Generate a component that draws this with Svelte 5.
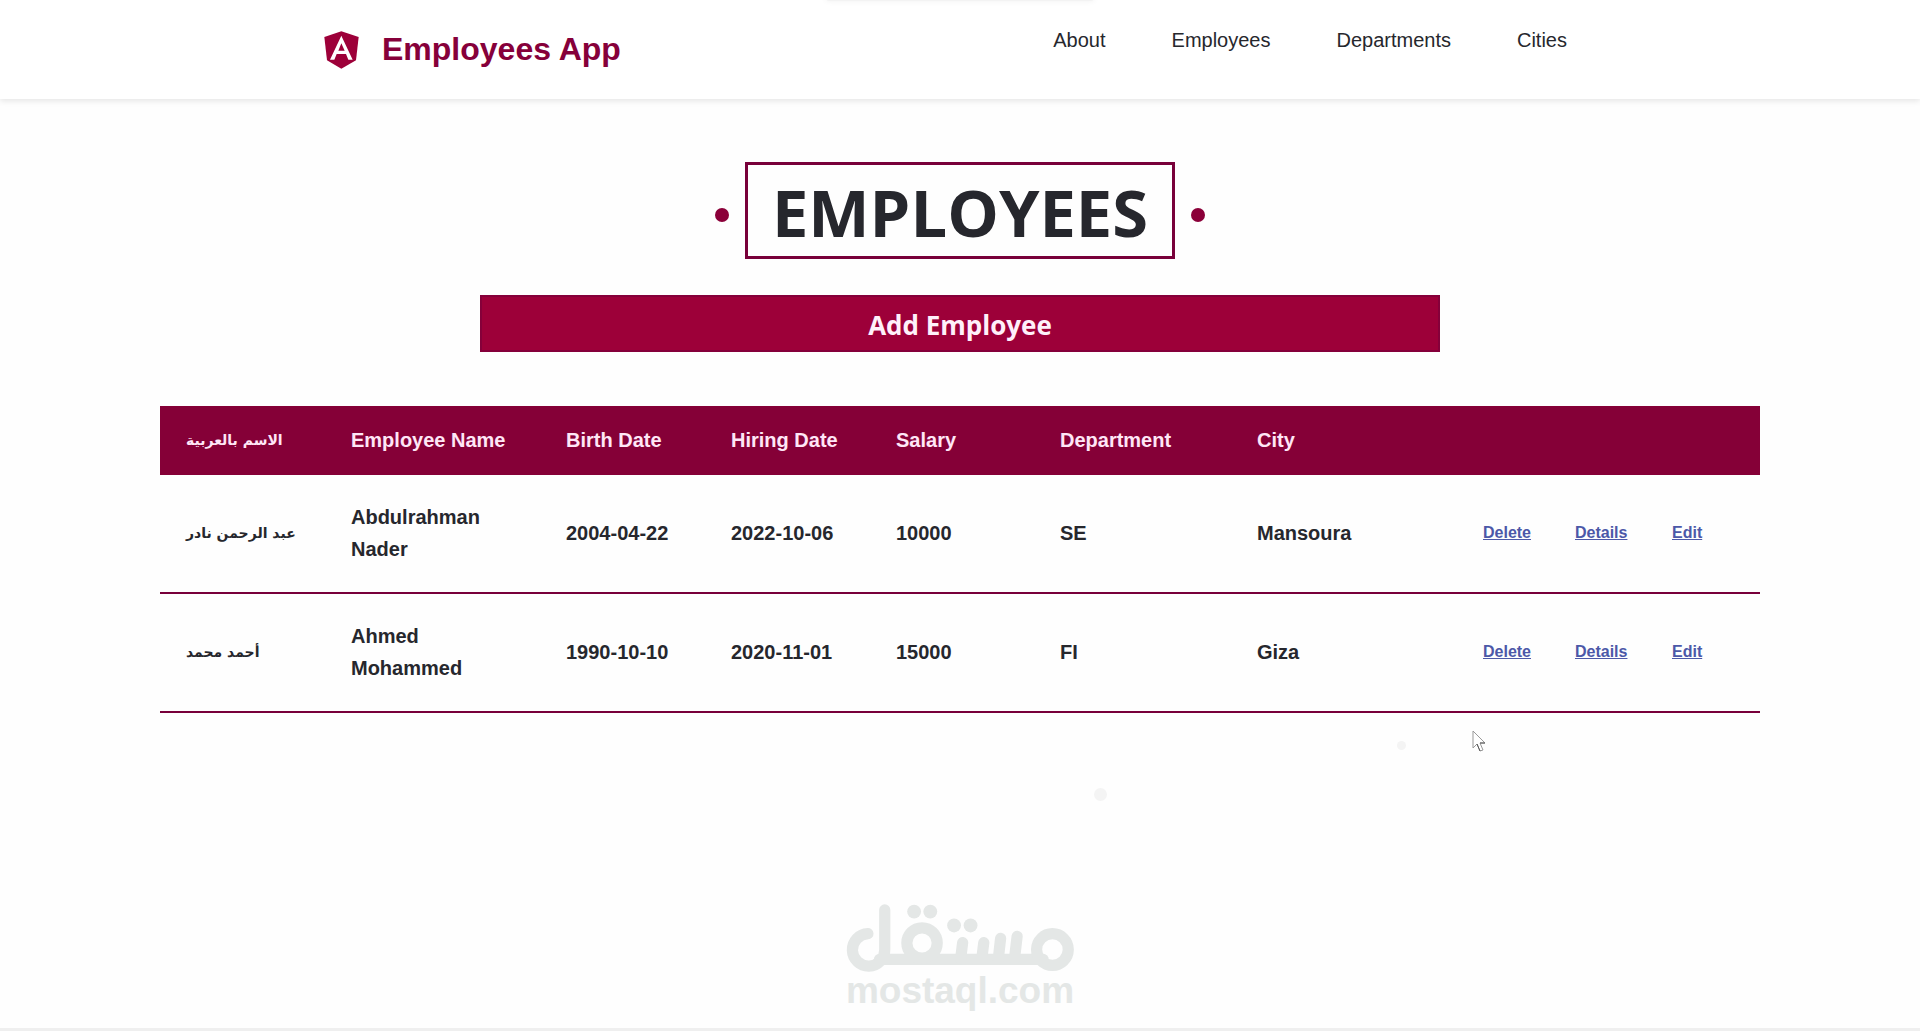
<script>
  const links = ['About', 'Employees', 'Departments', 'Cities'];
  const columns = ['الاسم بالعربية', 'Employee Name', 'Birth Date', 'Hiring Date', 'Salary', 'Department', 'City'];
  const employees = [
    { arabic: 'عبد الرحمن نادر', name: 'Abdulrahman Nader', birth: '2004-04-22', hired: '2022-10-06', salary: 10000, department: 'SE', city: 'Mansoura' },
    { arabic: 'أحمد محمد', name: 'Ahmed Mohammed', birth: '1990-10-10', hired: '2020-11-01', salary: 15000, department: 'FI', city: 'Giza' }
  ];
  const actions = ['Delete', 'Details', 'Edit'];
</script>

<div class="page">
  <header>
    <a class="brand" href="#home">
      <svg viewBox="0 0 105 114" width="35" height="38" aria-hidden="true">
        <path fill="#9d0039" d="M52 1 104 18 96 88 52 113 9 88 1 18Z" />
        <path fill="#fff" fill-rule="evenodd" d="M52 14 18 86h13l7-17h28l7 17h13ZM52 37l10 22H43Z" />
      </svg>
      <span>Employees App</span>
    </a>
    <nav aria-label="Main">
      {#each links as link}
        <a href={'#' + link.toLowerCase()}>{link}</a>
      {/each}
    </nav>
  </header>

  <main>
    <div class="title">
      <span class="dot"></span>
      <h1>EMPLOYEES</h1>
      <span class="dot"></span>
    </div>

    <button class="add" type="button">Add Employee</button>

    <table>
      <colgroup>
        <col class="c-arabic" /><col class="c-name" /><col class="c-date" /><col class="c-date" /><col class="c-salary" />
        <col class="c-department" /><col class="c-city" /><col class="c-delete" /><col class="c-details" /><col class="c-edit" />
      </colgroup>
      <thead>
        <tr>
          {#each columns as column, i}
            <th class:arabic={i === 0} scope="col">{column}</th>
          {/each}
          <td colspan="3"></td>
        </tr>
      </thead>
      <tbody>
        {#each employees as e}
          <tr>
            <td class="arabic">{e.arabic}</td>
            <td>{e.name}</td>
            <td>{e.birth}</td>
            <td>{e.hired}</td>
            <td>{e.salary}</td>
            <td>{e.department}</td>
            <td>{e.city}</td>
            {#each actions as action}
              <td class="action"><a href={'#' + action.toLowerCase()}>{action}</a></td>
            {/each}
          </tr>
        {/each}
      </tbody>
    </table>
  </main>

  <footer>
    <svg viewBox="75 70 690 206" width="230" height="68" aria-hidden="true">
      <g fill="none" stroke="#e4e7e6" stroke-width="34" stroke-linecap="round" stroke-linejoin="round">
        <path d="M141 160A49 49 0 1 0 192 208V88" />
        <path d="M176 238H672" />
        <circle cx="305" cy="188" r="46" />
        <circle cx="700" cy="208" r="48" />
        <path d="M428 187 422 236M492 187 486 236M543 174 536 236M593 168 585 236" />
      </g>
      <g fill="#e4e7e6">
        <circle cx="281" cy="93" r="21" /><circle cx="330" cy="93" r="21" />
        <circle cx="402" cy="135" r="21" /><circle cx="452" cy="135" r="21" />
      </g>
    </svg>
    <span>mostaql.com</span>
  </footer>

  <div class="top-shade"></div>
  <span class="speck speck-a"></span>
  <span class="speck speck-b"></span>
  <svg class="cursor" viewBox="0 0 14 22" width="14" height="22" aria-hidden="true">
    <path d="M1 1V18L5 14 8 21 11 20 8 13H13Z" fill="#fff" stroke="#999" />
    <path d="M8 13h5M5 14l3 7" stroke="#555" />
  </svg>
</div>

<style>
  :global(body) {
    margin: 0;
    background: #fefefe;
  }

  .page {
    position: relative;
    display: flex;
    flex-direction: column;
    box-sizing: border-box;
    min-height: 100vh;
    border-bottom: 3px solid #efefef;
    color: #26272d;
    font-family: "Liberation Sans", Arial, sans-serif;
    font-size: 20px;
    line-height: 32px;
    overflow: hidden;
  }

  header {
    display: flex;
    align-items: center;
    justify-content: space-between;
    height: 99px;
    padding: 0 353px 0 324px;
    background: #fff;
    box-shadow: 0 2px 6px rgba(0, 0, 0, 0.1);
  }

  .brand {
    display: flex;
    align-items: center;
    gap: 23px;
    color: #86003a;
    font-size: 32px;
    font-weight: bold;
    text-decoration: none;
    white-space: nowrap;
  }

  .brand span {
    padding-bottom: 2px;
  }

  nav {
    display: flex;
    gap: 66px;
    padding-bottom: 20px;
  }

  nav a {
    color: inherit;
    text-decoration: none;
  }

  main {
    display: flex;
    flex-direction: column;
    align-items: center;
    padding: 63px 160px 0;
  }

  .title {
    display: flex;
    align-items: center;
    gap: 16px;
  }

  h1 {
    margin: 0;
    padding: 4px 24px 0;
    border: 3px solid #78003a;
    font-family: "Open Sans", "Noto Sans", sans-serif;
    font-size: 65px;
    font-weight: bold;
    line-height: 87px;
  }

  .dot {
    width: 14px;
    height: 14px;
    margin-top: 9px;
    border-radius: 50%;
    background: #8b0039;
  }

  .add {
    width: 60%;
    height: 57px;
    margin: 36px 0 54px;
    padding: 2px 0 0;
    border: 2px solid #85003a;
    background: #9d0039;
    color: #fff0fa;
    font-family: "Open Sans", "Noto Sans", sans-serif;
    font-size: 26px;
    font-weight: bold;
  }

  table {
    width: 100%;
    table-layout: fixed;
    border-collapse: separate;
    border-spacing: 0;
    font-weight: bold;
    text-align: left;
  }

  .c-arabic, .c-date { width: 165px; }
  .c-salary { width: 164px; }
  .c-name { width: 215px; }
  .c-department { width: 197px; }
  .c-city { width: 226px; }
  .c-delete { width: 92px; }
  .c-details { width: 97px; }
  .c-edit { width: 114px; }

  thead {
    background: #850037;
    color: #ffe6f6;
  }

  th, td {
    padding: 18px 18px 19px 26px;
  }

  tbody td {
    padding-top: 26px;
    padding-bottom: 27px;
    border-bottom: 2px solid #78003a;
  }

  .arabic {
    font-family: "DejaVu Sans", sans-serif;
    font-size: 14px;
    white-space: nowrap;
  }

  .action {
    font-size: 16px;
  }

  .action a {
    color: #4c58a8;
  }

  footer {
    display: flex;
    flex-direction: column;
    align-items: center;
    margin-top: auto;
    padding-bottom: 18px;
    color: #e4e7e6;
    font-size: 37px;
    font-weight: bold;
    line-height: 38px;
  }

  .top-shade {
    position: absolute;
    top: -8px;
    left: 50%;
    width: 270px;
    height: 9px;
    margin-left: -135px;
    border-radius: 8px;
    background: #f3f3f3;
    box-shadow: 0 0 6px rgba(0, 0, 0, 0.06);
  }

  .speck {
    position: absolute;
    border-radius: 50%;
    background: #f4f4f4;
  }

  .speck-a {
    top: 788px;
    left: 1094px;
    width: 13px;
    height: 13px;
  }

  .speck-b {
    top: 741px;
    left: 1397px;
    width: 9px;
    height: 9px;
  }

  .cursor {
    position: absolute;
    top: 730px;
    left: 1472px;
  }
</style>
